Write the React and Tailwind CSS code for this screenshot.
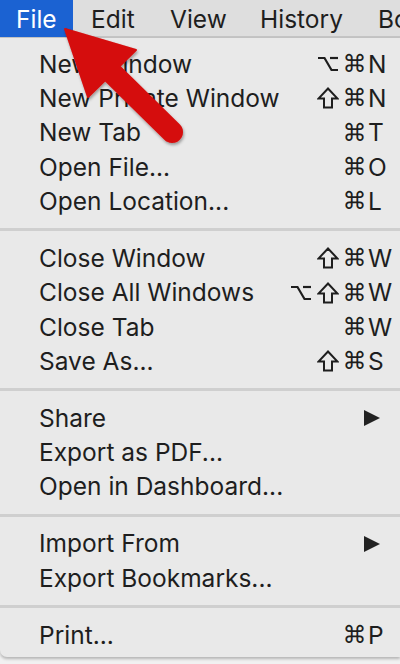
import React from 'react';

const sections = [
  [
    { label: 'New Window', mods: ['opt', 'cmd'], key: 'N' },
    { label: 'New Private Window', mods: ['shift', 'cmd'], key: 'N' },
    { label: 'New Tab', mods: ['cmd'], key: 'T' },
    { label: 'Open File...', mods: ['cmd'], key: 'O' },
    { label: 'Open Location...', mods: ['cmd'], key: 'L' },
  ],
  [
    { label: 'Close Window', mods: ['shift', 'cmd'], key: 'W' },
    { label: 'Close All Windows', mods: ['opt', 'shift', 'cmd'], key: 'W' },
    { label: 'Close Tab', mods: ['cmd'], key: 'W' },
    { label: 'Save As...', mods: ['shift', 'cmd'], key: 'S' },
  ],
  [
    { label: 'Share', submenu: true },
    { label: 'Export as PDF...' },
    { label: 'Open in Dashboard...' },
  ],
  [
    { label: 'Import From', submenu: true },
    { label: 'Export Bookmarks...' },
  ],
  [
    { label: 'Print...', mods: ['cmd'], key: 'P' },
  ],
];

const Mod = ({ type }) => {
  if (type === 'cmd') {
    return <span className="w-[27px] text-center text-[24px] leading-none" style={{ fontFamily: '"DejaVu Sans", sans-serif' }}>⌘</span>;
  }
  return (
    <span className="w-[27px] flex justify-center">
      {type === 'opt' ? (
        <svg width="22" height="22" viewBox="0 0 22 22" fill="none" stroke="#1e1e1e" strokeWidth="2.2">
          <path d="M1 5 H7.5 L14.5 17 H21" />
          <path d="M13 5 H21" />
        </svg>
      ) : (
        <svg width="22" height="22" viewBox="0 0 22 22" fill="none" stroke="#1e1e1e" strokeWidth="2" strokeLinejoin="miter">
          <path d="M11 1.5 L20.5 11.5 H15 V20.5 H7 V11.5 H1.5 Z" />
        </svg>
      )}
    </span>
  );
};

const MenuRow = ({ item }) => (
  <div className="flex items-center h-[34.3px] pl-[39px]">
    <span className="flex-1 whitespace-nowrap">{item.label}</span>
    {item.submenu && (
      <svg width="18" height="18" viewBox="0 0 18 18" className="mr-[19px]">
        <polygon points="1,1 17,9 1,17" fill="#222" />
      </svg>
    )}
    {item.key && (
      <>
        <div className="flex justify-end items-center">
          {item.mods.map((m, i) => <Mod key={i} type={m} />)}
        </div>
        <span className="w-[32px]">{item.key}</span>
      </>
    )}
  </div>
);

export default function App() {
  return (
    <div className="relative w-[400px] h-[664px] overflow-hidden bg-[#f1f1f1] text-[#1e1e1e] text-[24.5px]" style={{ fontFamily: 'Inter, "Liberation Sans", sans-serif' }}>
      <div className="flex h-[38px] items-center pt-[3px] bg-[#dedede] border-b-2 border-[#c4c4c4] whitespace-nowrap">
        <div className="shrink-0 h-[38px] -mt-[3px] pt-[3px] w-[73px] bg-[#1b62d2] text-white flex items-center pl-[16px]">File</div>
        <div className="shrink-0 pl-[18px] w-[97px]">Edit</div>
        <div className="shrink-0 w-[90px]">View</div>
        <div className="shrink-0 w-[118px]">History</div>
        <div className="shrink-0">Bookmarks</div>
      </div>

      <div className="bg-[#e9e9e9] rounded-bl-[7px] shadow-[0_2px_3px_rgba(0,0,0,0.25)] pt-[9px] pb-[5px]">
        {sections.map((sec, si) => (
          <div key={si}>
            {si > 0 && (
              <div className="h-[22.7px] flex items-center">
                <div className="w-full h-[3px] bg-[#cfcfcf]" />
              </div>
            )}
            {sec.map((item) => <MenuRow key={item.label} item={item} />)}
          </div>
        ))}
      </div>

      <svg className="absolute left-0 top-0 pointer-events-none" width="400" height="200" viewBox="0 0 400 200">
        <defs>
          <filter id="sh" x="-20%" y="-20%" width="140%" height="140%">
            <feDropShadow dx="1" dy="2" stdDeviation="1.5" floodColor="#000" floodOpacity="0.35" />
          </filter>
        </defs>
        <g filter="url(#sh)" fill="#d50a0a" stroke="#d50a0a">
          <line x1="110" y1="71" x2="172" y2="132" strokeWidth="22" strokeLinecap="round" />
          <polygon points="65,29 88,97 136,50" strokeWidth="2" strokeLinejoin="round" />
        </g>
      </svg>
    </div>
  );
}
